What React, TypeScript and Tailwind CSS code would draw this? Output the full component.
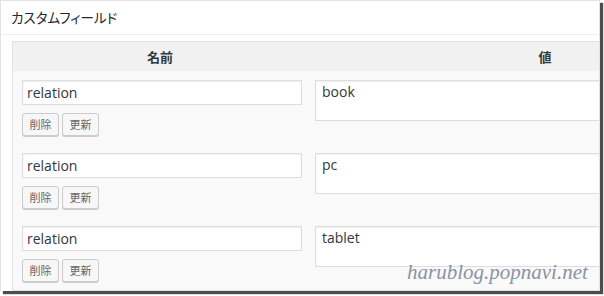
import React from "react";

const rows = [
  { name: "relation", value: "book" },
  { name: "relation", value: "pc" },
  { name: "relation", value: "tablet" },
];

export default function App() {
  return (
    <div className="relative w-[604px] h-[296px] bg-white overflow-hidden [font-family:'Open_Sans','Noto_Sans_CJK_JP',sans-serif]">
      <div className="w-[600px] h-[291px] bg-white border-t border-l border-r border-[#e3e3e3] shadow-[3px_3px_1px_rgba(0,0,0,0.7)] overflow-hidden">
        <div className="h-[34px] border-b border-[#ededed] flex items-center pl-[10px] text-[13.5px] text-[#23282d] [font-feature-settings:'palt'] [font-family:'Noto_Sans_CJK_JP',sans-serif]">
          カスタムフィールド
        </div>
        <div className="pt-[6px] pl-[11px]">
          <div className="w-[772px] border border-[#e1e1e1] bg-[#f9f9f9]">
            <div className="grid grid-cols-[294px_476px] h-[29px] bg-[#f1f1f1] items-center text-center text-[13px] font-bold text-[#32373c] [font-family:'Noto_Sans_CJK_JP',sans-serif]">
              <div>名前</div>
              <div>値</div>
            </div>
            {rows.map((r, i) => (
              <div key={i} className="grid grid-cols-[294px_476px] h-[73px]">
                <div className="pt-[9px] pl-[9px]">
                  <div className="w-[280px] h-[25px] bg-white border border-[#dddddd] shadow-[inset_0_1px_2px_rgba(0,0,0,0.07)] flex items-center pl-[4px] text-[14px] text-[#32373c]">
                    {r.name}
                  </div>
                  <div className="flex gap-[3px] mt-[8px]">
                    <div className="w-[37px] h-[23px] rounded-[3px] bg-[#f7f7f7] border border-[#cccccc] shadow-[0_1px_0_#cccccc] flex items-center justify-center text-[11px] text-[#666666] [font-family:'Noto_Sans_CJK_JP',sans-serif]">
                      削除
                    </div>
                    <div className="w-[37px] h-[23px] rounded-[3px] bg-[#f7f7f7] border border-[#cccccc] shadow-[0_1px_0_#cccccc] flex items-center justify-center text-[11px] text-[#666666] [font-family:'Noto_Sans_CJK_JP',sans-serif]">
                      更新
                    </div>
                  </div>
                </div>
                <div className="pt-[9px] pl-[8px]">
                  <div className="w-[460px] h-[41px] bg-white border border-[#dddddd] shadow-[inset_0_1px_2px_rgba(0,0,0,0.07)] pl-[6px] pt-[1px] text-[14px] leading-[20px] text-[#32373c]">
                    {r.value}
                  </div>
                </div>
              </div>
            ))}
          </div>
        </div>
      </div>
      <div className="absolute left-[407px] top-[260px] text-[21px] leading-[24px] italic text-[#8a93a3] [font-family:'Liberation_Serif',serif]">
        harublog.popnavi.net
      </div>
    </div>
  );
}
